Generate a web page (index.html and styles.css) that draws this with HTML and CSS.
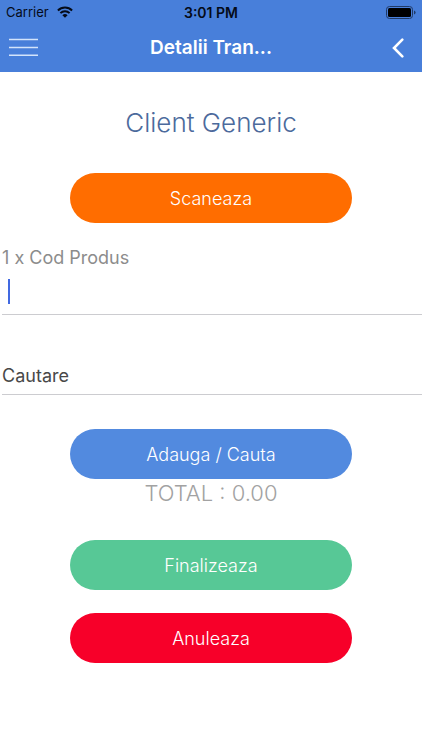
FILE: index.html
```html
<!DOCTYPE html>
<html lang="ro">
<head>
<meta charset="utf-8">
<meta name="viewport" content="width=device-width, initial-scale=1">
<title>Detalii Tranzactie</title>
<link rel="stylesheet" href="styles.css">
</head>
<body>
<header class="header">
  <div class="status">
    <div class="carrier">
      <span>Carrier</span>
      <svg width="16" height="12" viewBox="0 0 16 12" aria-hidden="true">
        <g fill="none" stroke="#050b18" stroke-width="2">
          <path d="M0.9 4.5A10.2 10.2 0 0 1 15.1 4.5"/>
          <path d="M3.4 7.1A6.6 6.6 0 0 1 12.6 7.1"/>
        </g>
        <path d="M5.4 9.2A3.8 3.8 0 0 1 10.6 9.2L8 11.8Z" fill="#050b18"/>
      </svg>
    </div>
    <span class="time">3:01 PM</span>
    <svg class="battery" width="30" height="13" viewBox="0 0 30 13" aria-hidden="true">
      <rect x="0.5" y="0.5" width="26" height="12" rx="3" fill="none" stroke="#203a66"/>
      <rect x="2" y="2" width="23" height="9" rx="1.5" fill="#000"/>
      <path d="M28 4.5Q29.6 5 29.6 6.5T28 8.5Z" fill="#203a66"/>
    </svg>
  </div>
  <nav class="nav">
    <button class="icon-button" type="button" aria-label="Meniu">
      <svg width="29" height="18" viewBox="0 0 29 18" aria-hidden="true">
        <path d="M0 1.5H29M0 9.5H29M0 17.2H29" stroke="#d3e4fb" stroke-width="1.4"/>
      </svg>
    </button>
    <h1 class="title">Detalii Tran...</h1>
    <button class="icon-button back" type="button" aria-label="Inapoi">
      <svg width="12" height="20" viewBox="0 0 12 20" aria-hidden="true">
        <path d="M10.3 1.6L2 10L10.3 18.4" fill="none" stroke="#fff" stroke-width="2.6" stroke-linecap="round"/>
      </svg>
    </button>
  </nav>
</header>
<main class="main">
  <h2 class="client">Client Generic</h2>
  <button class="action scan" type="button">Scaneaza</button>
  <div class="field">
    <label class="label" for="code">1 x Cod Produs</label>
    <div class="entry">
      <input class="input" id="code" type="text">
      <span class="caret"></span>
    </div>
  </div>
  <input class="input search" type="text" placeholder="Cautare" aria-label="Cautare">
  <button class="action add" type="button">Adauga / Cauta</button>
  <p class="total">TOTAL : 0.00</p>
  <button class="action finish" type="button">Finalizeaza</button>
  <button class="action cancel" type="button">Anuleaza</button>
</main>
</body>
</html>
```
FILE: styles.css
```css
* {
  box-sizing: border-box;
}

body {
  margin: 0;
  background: #fff;
  font-family: Inter, "Liberation Sans", sans-serif;
}

.header {
  padding-bottom: 2px;
  background: #487fda;
}

.status {
  display: grid;
  grid-template-columns: 1fr auto 1fr;
  align-items: center;
  height: 24px;
  padding: 0 6px;
  color: #050b18;
  font-size: 13px;
}

.carrier {
  display: flex;
  align-items: center;
  gap: 8px;
}

.time {
  font-size: 14px;
  font-weight: 600;
}

.battery {
  justify-self: end;
}

.nav {
  display: grid;
  grid-template-columns: 60px 1fr 60px;
  align-items: center;
  height: 46px;
}

.icon-button {
  display: flex;
  height: 46px;
  align-items: center;
  padding: 0 9px;
  border: 0;
  background: none;
}

.back {
  justify-content: flex-end;
  padding: 2px 18px 0;
}

.title {
  margin: 0;
  color: #fff;
  font-size: 19px;
  font-weight: 600;
  text-align: center;
}

.main {
  display: flex;
  flex-direction: column;
  align-items: center;
}

.client {
  margin: 32px 0 31px;
  color: #4c6a9c;
  font-size: 26px;
  font-weight: 300;
  line-height: 38px;
}

.action {
  width: 66.6%;
  height: 50px;
  border: 0;
  border-radius: 25px;
  color: #fff;
  font-family: inherit;
  font-size: 18px;
  font-weight: 300;
}

.scan {
  background: #ff6d00;
}

.add {
  background: #528adf;
}

.finish {
  background: #57c896;
}

.cancel {
  margin-top: 23px;
  background: #f70029;
}

.field {
  align-self: stretch;
  margin: 22px 0 36px 2px;
}

.label {
  display: block;
  color: #8c8c8c;
  font-size: 18px;
  font-weight: 400;
  line-height: 26px;
}

.entry {
  position: relative;
}

.input {
  display: block;
  width: 100%;
  height: 44px;
  padding: 0 6px;
  border: 0;
  border-bottom: 1px solid #ccccd0;
  border-radius: 0;
  outline: 0;
  background: none;
  color: #484848;
  font-family: inherit;
  font-size: 18px;
}

.caret {
  position: absolute;
  top: 8px;
  left: 6px;
  width: 2px;
  height: 25px;
  background: #4169e1;
}

.search {
  align-self: stretch;
  width: auto;
  margin: 0 0 34px 2px;
  padding: 6px 0 0;
}

.search::placeholder {
  color: #484848;
  opacity: 1;
}

.total {
  margin: 0 0 32px;
  color: #a2a2a2;
  font-size: 22px;
  font-weight: 300;
  line-height: 29px;
}
```
